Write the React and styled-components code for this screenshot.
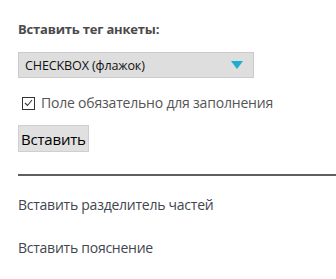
import React from "react";
import styled, { createGlobalStyle } from "styled-components";

const Global = createGlobalStyle`
  html, body { margin: 0; padding: 0; background: #fff; }
  body { font-family: "Open Sans", "Noto Sans", sans-serif; }
`;

const Page = styled.div`
  padding: 20px 0 0 18px;
  overflow: hidden;
`;

const Title = styled.div`
  font-size: 13px;
  font-weight: 700;
  color: #4a4a4a;
  line-height: 18px;
  letter-spacing: -0.2px;
`;

const Select = styled.div`
  margin-top: 14px;
  width: 236px;
  height: 26px;
  box-sizing: border-box;
  background: #dedede;
  border: 1px solid #cbcbcb;
  display: flex;
  align-items: center;
  justify-content: space-between;
  padding: 0 10px 0 6px;
  font-size: 12.6px;
  letter-spacing: -0.15px;
  color: #111;
`;

const Arrow = styled.span`
  width: 0;
  height: 0;
  border-left: 6px solid transparent;
  border-right: 6px solid transparent;
  border-top: 8px solid #1aaed0;
`;

const CheckRow = styled.label`
  margin-top: 15px;
  display: flex;
  align-items: center;
  gap: 6px;
  padding-left: 4px;
  font-size: 14px;
  letter-spacing: -0.2px;
  color: #555;
  line-height: 20px;
`;

const Box = styled.span`
  width: 11px;
  height: 11px;
  border: 1px solid #333;
  display: flex;
  align-items: center;
  justify-content: center;
  background: #fff;
`;

const Button = styled.button`
  margin-top: 12px;
  display: block;
  height: 27px;
  padding: 0 2px;
  background: #e0e0e0;
  border: 1px solid #cfcfcf;
  font-family: inherit;
  font-size: 15px;
  letter-spacing: -0.2px;
  color: #000;
  line-height: 24px;
`;

const Rule = styled.div`
  margin-top: 22px;
  height: 2px;
  background: #5f5f5f;
`;

const Link = styled.div`
  font-size: 14px;
  letter-spacing: -0.25px;
  color: #3f4650;
  line-height: 20px;
  margin-top: ${(p) => p.$gap}px;
`;

export default function App() {
  return (
    <>
      <Global />
      <Page>
        <Title>Вставить тег анкеты:</Title>
        <Select>
          <span>CHECKBOX (флажок)</span>
          <Arrow />
        </Select>
        <CheckRow>
          <Box>
            <svg width="9" height="8" viewBox="0 0 9 8">
              <path d="M1 4 L3.5 6.5 L8 1" fill="none" stroke="#333" strokeWidth="1.1" />
            </svg>
          </Box>
          Поле обязательно для заполнения
        </CheckRow>
        <Button>Вставить</Button>
        <Rule />
        <Link $gap={19}>Вставить разделитель частей</Link>
        <Link $gap={23}>Вставить пояснение</Link>
      </Page>
    </>
  );
}
